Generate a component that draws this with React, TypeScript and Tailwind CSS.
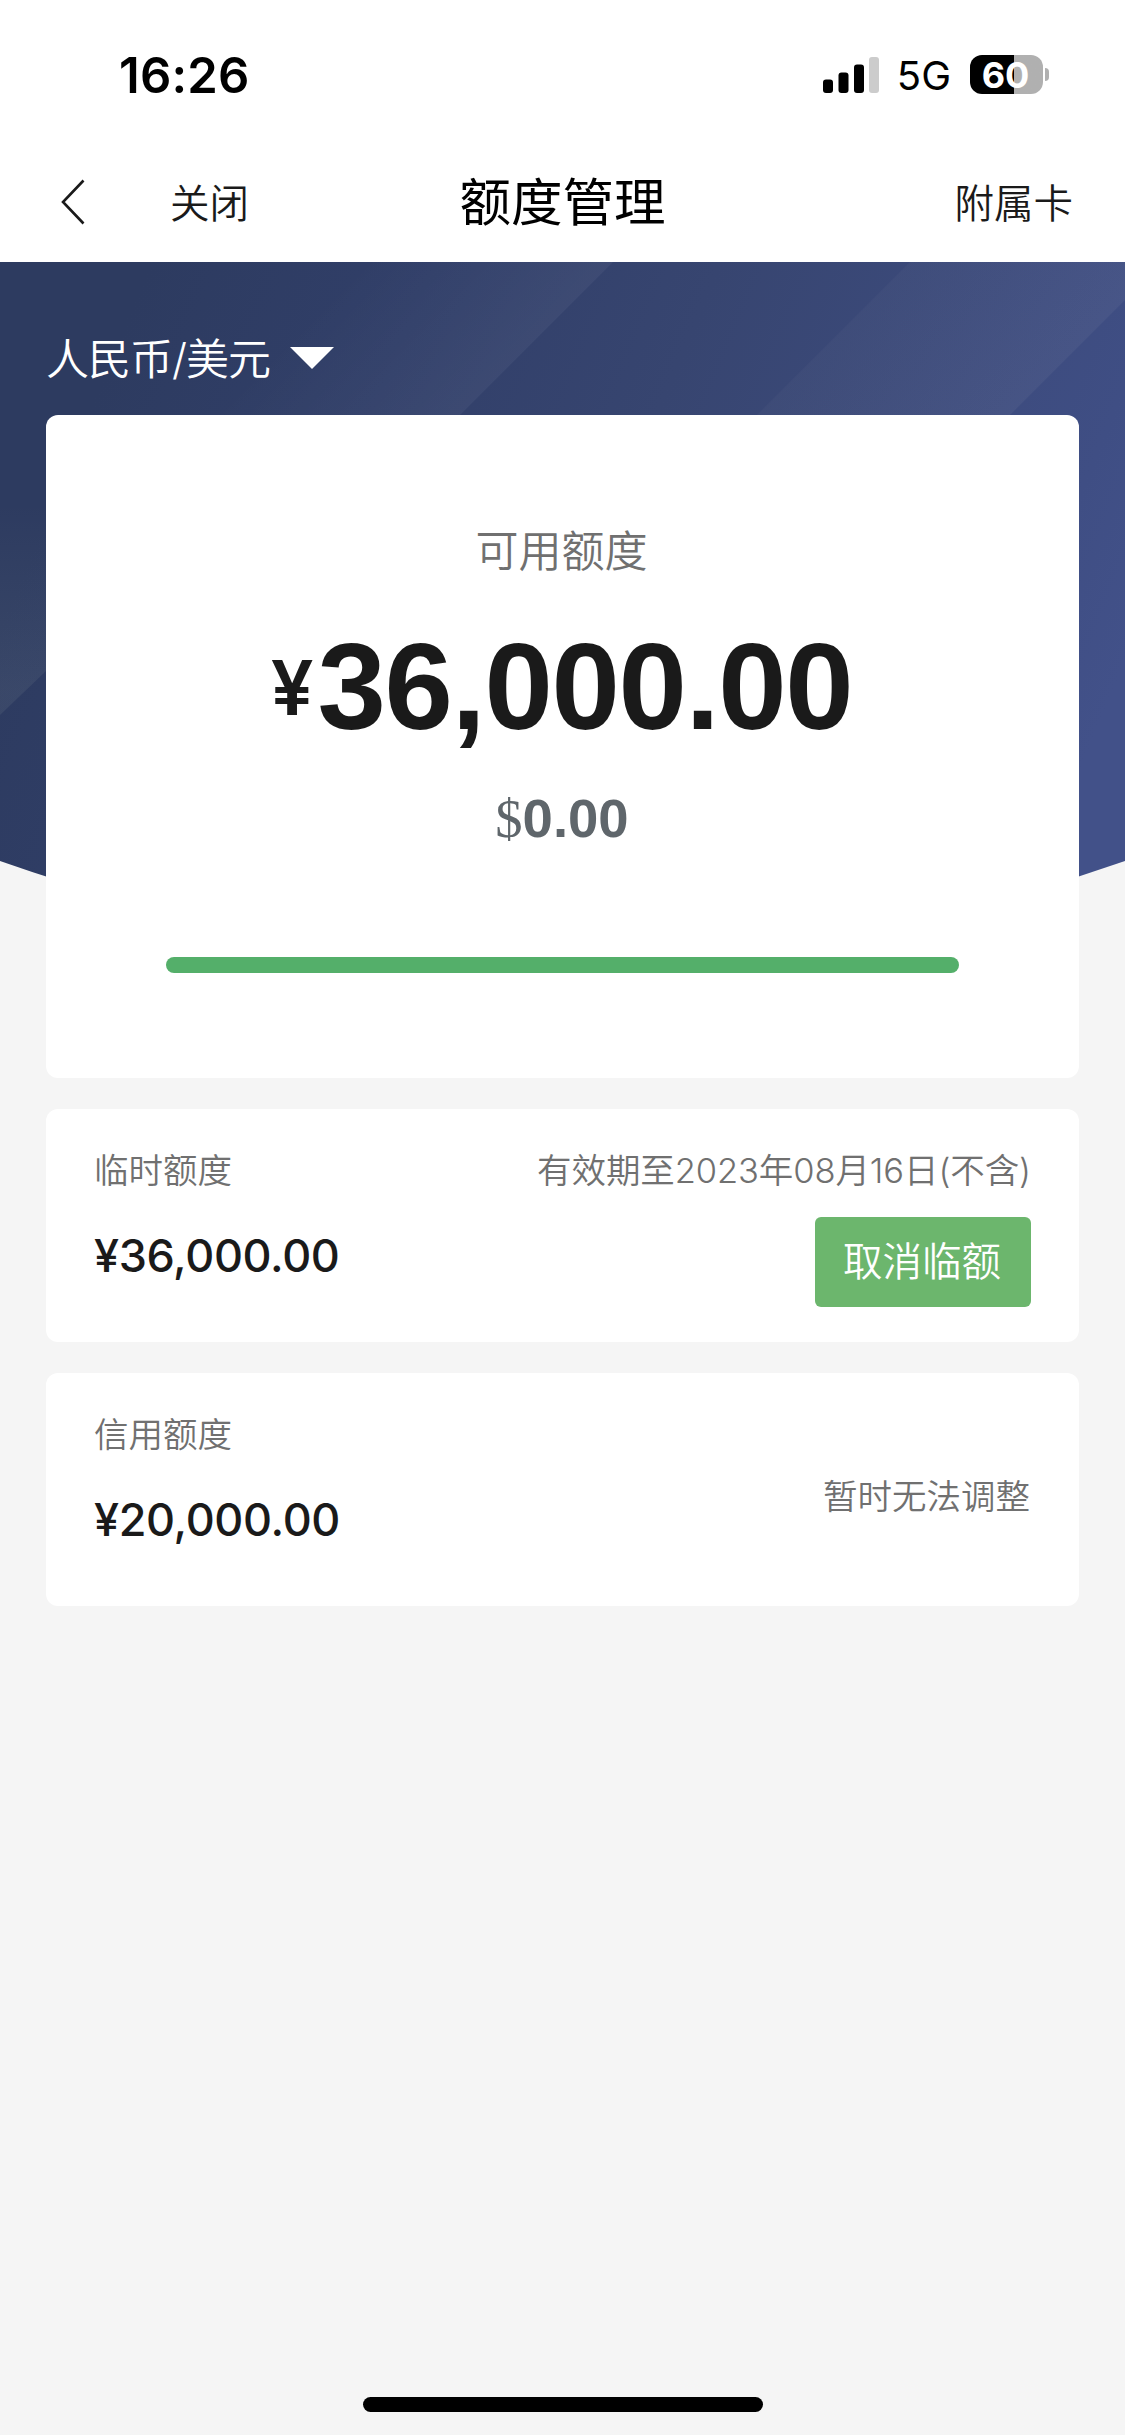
import type { ReactNode } from "react";

type LimitItem = {
  id: string;
  label: string;
  amount: string;
};

const temporary: LimitItem = {
  id: "temporary",
  label: "临时额度",
  amount: "¥36,000.00",
};

const credit: LimitItem = {
  id: "credit",
  label: "信用额度",
  amount: "¥20,000.00",
};

export default function App() {
  return (
    <div className="flex h-[2435px] w-[1125px] flex-col overflow-hidden bg-[#f5f5f5] font-['Inter','Noto_Sans_CJK_SC',sans-serif] text-[#1a1a1a]">
      <StatusBar />
      <NavBar />
      <main className="relative flex flex-1 flex-col px-[46px]">
        <Backdrop />
        <CurrencyPicker />
        <AvailableCard />
        <LimitCard item={temporary}>
          <div className="flex flex-col items-end">
            <p className="mt-[36px] h-[52px] text-[34.5px] leading-[52px] font-[350] tracking-[-0.1px] whitespace-nowrap text-[#707070]">
              有效期至2023年08月16日(不含)
            </p>
            <button
              type="button"
              className="mt-[20px] flex h-[90px] w-[216px] items-center justify-center rounded-[6px] bg-[#6cb66d] pt-[2px] pr-[2px] text-[39.5px] leading-none font-[350] text-white"
            >
              取消临额
            </button>
          </div>
        </LimitCard>
        <LimitCard item={credit}>
          <p className="mt-[98px] mr-[1px] h-[52px] text-[34.5px] leading-[52px] font-[350] text-[#707070]">
            暂时无法调整
          </p>
        </LimitCard>
      </main>
      <div className="mb-[23px] h-[15px] w-[400px] shrink-0 self-center rounded-full bg-black" />
    </div>
  );
}

function StatusBar() {
  return (
    <div className="flex h-[146px] shrink-0 items-start justify-between bg-white pr-[76px] pl-[119px] text-black">
      <span className="mt-[46px] text-[49px] leading-[60px] font-semibold tracking-[0.2px]">
        16:26
      </span>
      <div className="mt-[55px] flex h-[39px] items-center">
        <svg width="57" height="36" viewBox="0 0 57 36" aria-hidden>
          <rect x="0" y="22.5" width="10" height="13.5" rx="3" />
          <rect x="15.5" y="15.5" width="10" height="20.5" rx="3" />
          <rect x="31" y="7.5" width="10" height="28.5" rx="3" />
          <rect x="46" y="0" width="10" height="36" rx="3" fill="#cccccc" />
        </svg>
        <span className="mt-[2px] ml-[17px] text-[40px] leading-[39px]">5G</span>
        <div className="ml-[19px] flex items-center">
          <div className="flex h-[39px] w-[73px] items-center justify-center rounded-[12px] bg-linear-to-r from-black from-60% to-[#b0b0b0] to-60% pr-[2px] text-[36px] leading-none font-bold text-white">
            60
          </div>
          <div className="ml-[2px] h-[13px] w-[4px] rounded-r-full bg-[#b0b0b0]" />
        </div>
      </div>
    </div>
  );
}

function NavBar() {
  return (
    <header className="grid h-[116px] shrink-0 grid-cols-[1fr_auto_1fr] items-center bg-white px-[52px] text-[39.5px] text-[#1a1a1a]">
      <div className="flex items-center">
        <svg className="mb-[4px] ml-[9px]" width="24" height="46" viewBox="0 0 24 46" fill="none" aria-hidden>
          <path d="M22.5 1.5 2 23l20.500 21.500" stroke="currentColor" strokeWidth="2.600" />
        </svg>
        <span className="ml-[85px] leading-[58px] font-[350]">关闭</span>
      </div>
      <h1 className="mb-[4px] text-[51.5px] leading-[76px] text-black">额度管理</h1>
      <span className="justify-self-end leading-[58px] font-[350]">附属卡</span>
    </header>
  );
}

/** Faceted blue banner with a curved lower edge, drawn behind the cards. */
function Backdrop() {
  return (
    <svg
      className="absolute top-0 left-0"
      width="1125"
      height="680"
      viewBox="0 0 1125 680"
      aria-hidden
    >
      <defs>
        <linearGradient id="base" gradientUnits="userSpaceOnUse" x1="150" y1="0" x2="1125" y2="400">
          <stop offset="0" stopColor="#2d3b60" />
          <stop offset="0.25" stopColor="#313f69" />
          <stop offset="0.5" stopColor="#374570" />
          <stop offset="0.9" stopColor="#3f4e84" />
          <stop offset="1" stopColor="#425189" />
        </linearGradient>
        <linearGradient id="facetMid" gradientUnits="userSpaceOnUse" x1="360" y1="0" x2="500" y2="140">
          <stop offset="0" stopColor="#fff" stopOpacity="0" />
          <stop offset="1" stopColor="#fff" stopOpacity="0.05" />
        </linearGradient>
        <linearGradient id="facetRight" gradientUnits="userSpaceOnUse" x1="880" y1="20" x2="1010" y2="150">
          <stop offset="0" stopColor="#f4eee0" stopOpacity="0.025" />
          <stop offset="1" stopColor="#f4eee0" stopOpacity="0.05" />
        </linearGradient>
        <linearGradient id="facetLeft" gradientUnits="userSpaceOnUse" x1="0" y1="240" x2="0" y2="430">
          <stop offset="0" stopColor="#e0ecd0" stopOpacity="0" />
          <stop offset="1" stopColor="#e0ecd0" stopOpacity="0.07" />
        </linearGradient>
        <clipPath id="curve">
          <path d="M0 0h1125v599Q562.500 797 0 599z" />
        </clipPath>
      </defs>
      <g clipPath="url(#curve)">
        <rect width="1125" height="680" fill="url(#base)" />
        <path d="M360 0h253L460 153H207z" fill="url(#facetMid)" />
        <path d="M910 0h215v38L1010 153H757z" fill="url(#facetRight)" />
        <path d="M0 220h46v189L0 453z" fill="url(#facetLeft)" />
      </g>
    </svg>
  );
}

function CurrencyPicker() {
  return (
    <div className="relative flex h-[153px] shrink-0 items-center text-[43px] leading-[64px] font-[350] text-white">
      <span className="mt-[41px] tracking-[-1px]">人民币/美元</span>
      <svg className="mt-[39px] ml-[20px]" width="44" height="22" viewBox="0 0 44 22" fill="currentColor" aria-hidden>
        <path d="M0 0h44L22 22z" />
      </svg>
    </div>
  );
}

function AvailableCard() {
  return (
    <section className="relative flex h-[663px] shrink-0 flex-col items-center rounded-[12px] bg-white">
      <h2 className="mt-[104px] mr-[2px] text-[43px] leading-[64px] font-[350] text-[#707070]">可用额度</h2>
      <p className="mt-[34px] mr-[2px] flex h-[140px] items-center">
        <span className="mr-[4px] text-[76px] leading-none font-semibold">¥</span>
        <span className="font-['Liberation_Sans',sans-serif] text-[123px] leading-[140px] font-bold tracking-[-1.4px]">
          36,000.00
        </span>
      </p>
      <p className="mt-[29px] mr-[1px] flex h-[66px] items-center text-[54.500px] leading-[66px] text-[#5f666b]">
        <span className="font-['Liberation_Serif',serif]">$</span>
        <span className="font-['Liberation_Sans',sans-serif] font-bold">0.00</span>
      </p>
      <div className="mt-[105px] h-[16px] w-[793px] rounded-full bg-[#54af6a]" />
    </section>
  );
}

function LimitCard({ item, children }: { item: LimitItem; children: ReactNode }) {
  return (
    <section className="relative mt-[30.5px] flex h-[233.5px] shrink-0 justify-between rounded-[12px] bg-white px-[48px]">
      <div>
        <h3 className="mt-[36px] text-[34.5px] leading-[52px] font-[350] text-[#707070]">{item.label}</h3>
        <p className="mt-[29px] text-[45px] leading-[60px] font-medium tracking-[-0.35px]">{item.amount}</p>
      </div>
      {children}
    </section>
  );
}
